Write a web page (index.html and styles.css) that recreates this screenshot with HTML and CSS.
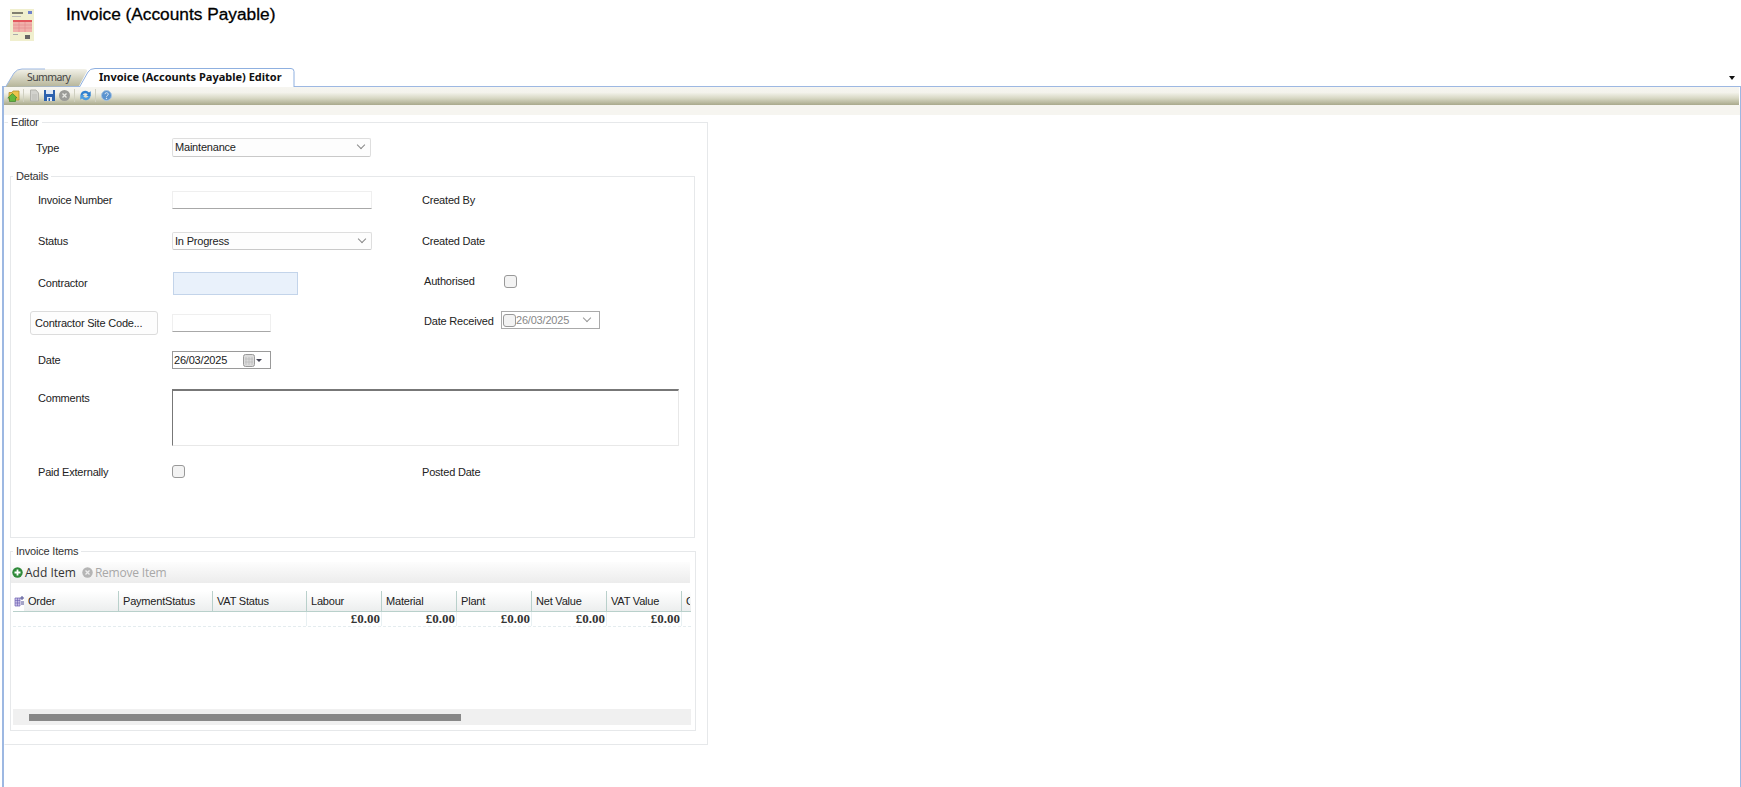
FILE: index.html
```html
<!doctype html>
<html>
<head>
  <meta charset="utf-8">
  <title>Invoice (Accounts Payable)</title>
  <link rel="stylesheet" href="styles.css">
</head>
<body>

  <header class="page-head">
    <svg class="logo" width="24" height="32" viewBox="0 0 24 32">
      <rect width="24" height="32" fill="#f0efce"/>
      <rect x="2" y="3" width="11" height="2" fill="#807f70"/>
      <rect x="18" y="2" width="4" height="3" fill="#6f82cc"/>
      <rect x="2" y="7" width="9" height="1" fill="#bbb"/>
      <rect x="3" y="11" width="19" height="2" fill="#e2565c"/>
      <rect x="3" y="13" width="19" height="10" fill="#f0b0aa"/>
      <path d="M9 13v10M15 13v10M3 16h19M3 19h19" stroke="#e4888a" stroke-width=".6"/>
      <rect x="3" y="25" width="5" height="1" fill="#aaa"/>
      <rect x="15" y="26" width="5" height="4" fill="#666"/>
    </svg>
    <h1 class="title">Invoice (Accounts Payable)</h1>
  </header>

  <nav class="tabs">
    <div class="tab tab-summary">
      <svg class="tab-shape" width="82" height="19" viewBox="0 0 82 19">
        <defs>
          <linearGradient id="tabfill" x1="0" y1="0" x2="0" y2="1">
            <stop offset="0" stop-color="#f2f1e8"/>
            <stop offset="1" stop-color="#b5b498"/>
          </linearGradient>
        </defs>
        <path d="M.5 19 9 5Q12 1 17 1H79Q84 1 81 5L74 18" fill="url(#tabfill)"/>
        <path d="M.5 19 9 5Q12 1 17 1H40" fill="none" stroke="#9db8e2"/>
      </svg>
      <span>Summary</span>
    </div>
    <div class="tab tab-active">
      <svg class="tab-shape" width="216" height="19" viewBox="0 0 216 19">
        <path d="M.5 19 9 4Q11 .5 16 .5H212Q215 .5 215 3.500V19" fill="#fff" stroke="#8fb0e0"/>
      </svg>
      <span>Invoice (Accounts Payable) Editor</span>
    </div>
    <span class="tab-menu"></span>
  </nav>

  <main class="panel">
    <div class="toolbar">
      <svg class="tool" width="13" height="13" viewBox="0 0 13 13">
        <path d="M2 11V3.500h3l1-1.500h6v9z" fill="#edc44e" stroke="#b58f28" stroke-width=".8"/>
        <path d="M5.500 4.500 .8 9h1.700v3.500h6V9h1.700z" fill="#63b83e" stroke="#2f7d1e" stroke-width=".6"/>
      </svg>
      <i class="tool-sep"></i>
      <svg class="tool" width="13" height="13" viewBox="0 0 13 13">
        <path d="M2.500 1H8l2.500 3v8h-8z" fill="#d2d2cd" stroke="#b2b2ac"/>
        <path d="M4 6h5M4 8h5M4 10h5" stroke="#bcbcb6"/>
      </svg>
      <svg class="tool" width="13" height="13" viewBox="0 0 13 13">
        <path d="M1 1h11v11H1z" fill="#2d62ae"/>
        <path d="M3 1h7v4H3z" fill="#dfe8f5"/>
        <path d="M4 8h5v4H4z" fill="#dfe8f5"/>
        <path d="M5.500 9h1.500v3h-1.500z" fill="#2d62ae"/>
      </svg>
      <svg class="tool" width="13" height="13" viewBox="0 0 13 13">
        <circle cx="6.500" cy="6.500" r="5.500" fill="#9b9b98"/>
        <path d="M4.500 4.500l4 4M8.500 4.500l-4 4" stroke="#e8e8e4" stroke-width="1.300"/>
      </svg>
      <i class="tool-sep"></i>
      <svg class="tool" width="13" height="13" viewBox="0 0 13 13">
        <path d="M1.500 6a4.800 4.800 0 0 1 8.500-2.500l1.700-1.200V7H7.200l1.500-1.300A3 3 0 0 0 3.500 6z" fill="#2f80d0"/>
        <path d="M11.500 7A4.800 4.800 0 0 1 3 9.500l-1.700 1.200V6h4.500L4.300 7.300A3 3 0 0 0 9.500 7z" fill="#4a9be0"/>
      </svg>
      <i class="tool-sep"></i>
      <svg class="tool" width="13" height="13" viewBox="0 0 13 13">
        <circle cx="6.500" cy="6.500" r="5" fill="#5b93cf" stroke="#a9c5e2"/>
        <path d="M5 5.200a1.600 1.600 0 1 1 2.300 1.500c-.6.300-.8.600-.8 1.100" fill="none" stroke="#dfeaf6"/>
        <circle cx="6.500" cy="9.500" r=".7" fill="#dfeaf6"/>
      </svg>
    </div>
    <div class="band"></div>

    <fieldset class="group group-editor">
      <legend>Editor</legend>

      <div class="row row-type">
        <label class="label label-type">Type</label>
        <div class="select select-type">Maintenance</div>
      </div>

      <fieldset class="group group-details">
        <legend>Details</legend>

        <div class="row row-number">
          <label class="label">Invoice Number</label>
          <div class="col-field"><input class="input input-wide" type="text"></div>
          <label class="label">Created By</label>
        </div>

        <div class="row row-status">
          <label class="label">Status</label>
          <div class="col-field"><div class="select">In Progress</div></div>
          <label class="label">Created Date</label>
        </div>

        <div class="row row-contractor">
          <label class="label">Contractor</label>
          <div class="col-field"><div class="lookup"></div></div>
          <label class="label label-right label-auth">Authorised</label>
          <span class="check"></span>
        </div>

        <div class="row row-site">
          <button class="site-btn" type="button">Contractor Site Code...</button>
          <div class="col-field"><input class="input input-short" type="text"></div>
          <label class="label label-right label-received">Date Received</label>
          <div class="date-off">
            <span class="check"></span>
            <span class="date-off-text">26/03/2025</span>
          </div>
        </div>

        <div class="row row-date">
          <label class="label">Date</label>
          <div class="col-field">
            <div class="date-box">
              <span>26/03/2025</span>
              <svg class="cal" width="12" height="13" viewBox="0 0 12 13">
                <rect x=".5" y=".5" width="11" height="12" rx="2" fill="#dcdcdc" stroke="#9a9a9a"/>
                <path d="M3 3v8M6 3v8M9 3v8M2 5h8M2 8h8" stroke="#b8b8b8" stroke-width=".7"/>
              </svg>
              <i class="date-arrow"></i>
            </div>
          </div>
        </div>

        <div class="row row-comments">
          <label class="label label-comments">Comments</label>
          <textarea class="comments"></textarea>
        </div>

        <div class="row row-paid">
          <label class="label">Paid Externally</label>
          <div class="col-field"><span class="check"></span></div>
          <label class="label">Posted Date</label>
        </div>
      </fieldset>

      <fieldset class="group group-items">
        <legend>Invoice Items</legend>

        <div class="items-bar">
          <svg width="11" height="11" viewBox="0 0 11 11">
            <circle cx="5.500" cy="5.500" r="5.200" fill="#2f8a3a"/>
            <path d="M5.500 2.500v6M2.500 5.500h6" stroke="#fff" stroke-width="1.800"/>
          </svg>
          <span class="bar-btn">Add Item</span>
          <svg class="bar-icon-off" width="11" height="11" viewBox="0 0 11 11">
            <circle cx="5.500" cy="5.500" r="5.200" fill="#b5b5b5"/>
            <path d="M3.500 3.500l4 4M7.500 3.500l-4 4" stroke="#eee" stroke-width="1.300"/>
          </svg>
          <span class="bar-btn bar-btn-off">Remove Item</span>
        </div>

        <div class="grid">
          <div class="grid-row grid-head">
            <div class="cell cell-chooser">
              <svg width="11" height="12" viewBox="0 0 11 12">
                <path d="M1 3h5v8H1z" fill="#c9bfe8" stroke="#6a5fb0" stroke-width=".7"/>
                <path d="M1 5.500h5M1 8h5M3.500 3v8" stroke="#6a5fb0" stroke-width=".6"/>
                <path d="M8 1v4M6 3h4M7 7h3M7 9h3" stroke="#4a4a90"/>
              </svg>
            </div>
            <div class="cell cell-order">Order</div>
            <div class="cell cell-wide">PaymentStatus</div>
            <div class="cell cell-wide">VAT Status</div>
            <div class="cell">Labour</div>
            <div class="cell">Material</div>
            <div class="cell">Plant</div>
            <div class="cell">Net Value</div>
            <div class="cell">VAT Value</div>
            <div class="cell cell-rest">Cost</div>
          </div>
          <div class="grid-row grid-sum">
            <div class="sum sum-blank"></div>
            <div class="sum">£0.00</div>
            <div class="sum">£0.00</div>
            <div class="sum">£0.00</div>
            <div class="sum">£0.00</div>
            <div class="sum">£0.00</div>
            <div class="sum sum-rest"></div>
          </div>
          <div class="grid-body"></div>
          <div class="hscroll"><div class="hscroll-thumb"></div></div>
        </div>
      </fieldset>
    </fieldset>
  </main>

</body>
</html>
```

FILE: styles.css
```css
html, body {
  height: 100%;
}

body {
  margin: 0;
  overflow: hidden;
  background: #fff;
  color: #222;
  font-family: "Liberation Sans", Arial, sans-serif;
  font-size: 11px;
  letter-spacing: -.2px;
}

.page-head {
  display: flex;
  height: 68px;
  padding: 9px 0 0 10px;
  box-sizing: border-box;
  letter-spacing: 0;
}

.title {
  margin: -5px 0 0 32px;
  font-size: 17.3px;
  line-height: 20px;
  font-weight: normal;
  color: #000;
  -webkit-text-stroke: .3px #000;
}

.tabs {
  display: flex;
  height: 18px;
  padding-left: 5px;
  position: relative;
  font-family: "Noto Sans", sans-serif;
  font-size: 11px;
  letter-spacing: 0;
}

.tab {
  position: relative;
  height: 19px;
  z-index: 1;
  line-height: 18px;
}

.tab span {
  position: relative;
}

.tab-shape {
  position: absolute;
  left: 0;
  top: 0;
}

.tab-summary {
  width: 74px;
  padding-left: 22px;
  box-sizing: border-box;
  font-size: 10.5px;
  letter-spacing: -.6px;
  color: #444;
}

.tab-active {
  width: 216px;
  padding-left: 20px;
  box-sizing: border-box;
  font-weight: bold;
  color: #111;
}

.tab-menu {
  position: absolute;
  right: 6px;
  top: 8px;
  border-top: 4px solid #111;
  border-left: 3px solid transparent;
  border-right: 3px solid transparent;
}

.panel {
  height: 701px;
  box-sizing: border-box;
  margin-left: 2px;
  border: 1px solid #9db8e2;
  border-left-width: 2px;
  border-bottom: none;
}

.toolbar {
  display: flex;
  align-items: center;
  gap: 2px;
  height: 18px;
  margin-right: 1px;
  padding: 0 0 2px 3px;
  box-sizing: border-box;
  background: linear-gradient(#f6f5f0 0, #f4f3ec 30%, #d8d8c4 62%, #a9a98c 100%);
}

.tool-sep {
  width: 1px;
  height: 13px;
  margin: 0 2px 0 1px;
  background: #cfcfc0;
}

.band {
  height: 10px;
  background: #f6f5f0;
}

.group {
  margin: 0;
  padding: 0;
  border: 1px solid #e6e8ea;
  box-sizing: border-box;
  min-width: 0;
}

.group legend {
  margin-left: 2px;
  padding: 0 3px;
  font-size: 11px;
  line-height: 14px;
  color: #333;
}

.group-editor {
  width: 704px;
  height: 630px;
  border-left-color: #fff;
}

.group-editor > legend {
  margin-left: 3px;
}

.row {
  display: flex;
  align-items: center;
}

.label {
  color: #222;
}

.row-type {
  height: 25px;
  margin-top: 5px;
  padding: 1px 0 0 31px;
  box-sizing: border-box;
}

.label-type {
  width: 136px;
  padding-top: 1px;
}

.select {
  position: relative;
  width: 200px;
  height: 18px;
  box-sizing: border-box;
  border: 1px solid #dedede;
  border-bottom-color: #c9c9c9;
  border-radius: 2px;
  background: #fdfdfd;
  padding-left: 2px;
  line-height: 16px;
}

.select::after {
  content: "";
  position: absolute;
  right: 6px;
  top: 3px;
  width: 5px;
  height: 5px;
  border-right: 1px solid #888;
  border-bottom: 1px solid #888;
  transform: rotate(45deg);
}

.select-type {
  width: 199px;
  height: 19px;
}

.group-details {
  width: 685px;
  height: 369px;
  margin: 10px 0 6px 5px;
}

.group-details .row {
  padding-left: 27px;
  box-sizing: border-box;
}

.group-details .row > .label:first-child {
  width: 134px;
}

.col-field {
  width: 250px;
}

.row-number {
  height: 33px;
  margin-bottom: 2px;
}

.row-status {
  height: 46px;
}

.row-contractor {
  height: 38px;
}

.row-site {
  height: 41px;
}

.row-date {
  height: 34px;
}

.row-comments {
  height: 60px;
  margin-top: 12px;
  align-items: flex-start;
}

.row-paid {
  height: 44px;
  margin-top: 1px;
}

.input {
  display: block;
  height: 18px;
  padding: 0;
  box-sizing: border-box;
  background: #fff;
  border: 1px solid #efefef;
  border-bottom: 1px solid #a8a8a8;
}

.input-wide {
  width: 200px;
}

.input-short {
  width: 99px;
}

.lookup {
  width: 125px;
  height: 23px;
  margin: 0 0 0 1px;
  box-sizing: border-box;
  background: #e9f1fb;
  border: 1px solid #c3d4ea;
}

.label-right {
  margin-left: 2px;
}

.label-auth {
  width: 80px;
  margin-top: -4px;
}

.row-contractor .check {
  margin-top: -4px;
}

.label-received {
  width: 77px;
  margin-top: -4px;
}

.check {
  display: inline-block;
  width: 13px;
  height: 13px;
  box-sizing: border-box;
  border: 1px solid #999;
  border-radius: 3px;
  background: #f3f3f3;
}

.site-btn {
  width: 128px;
  height: 24px;
  margin: 0 14px 0 -8px;
  padding: 0 0 0 4px;
  font: inherit;
  letter-spacing: inherit;
  text-align: left;
  color: #222;
  background: #fdfdfd;
  border: 1px solid #dcdcdc;
  border-radius: 3px;
}

.date-off {
  display: flex;
  align-items: center;
  width: 99px;
  height: 18px;
  margin-top: -5px;
  box-sizing: border-box;
  border: 1px solid #aaa;
  position: relative;
}

.date-off .check {
  margin-left: 1px;
  flex: none;
}

.date-off-text {
  color: #888;
}

.date-off::after {
  content: "";
  position: absolute;
  right: 9px;
  top: 3px;
  width: 5px;
  height: 5px;
  border-right: 1px solid #999;
  border-bottom: 1px solid #999;
  transform: rotate(45deg);
}

.date-box {
  display: flex;
  align-items: center;
  width: 99px;
  height: 18px;
  box-sizing: border-box;
  border: 1px solid #9a9a9a;
  color: #222;
  padding-left: 1px;
}

.cal {
  margin-left: 16px;
}

.date-arrow {
  margin-left: 1px;
  border-top: 3px solid #445;
  border-left: 3px solid transparent;
  border-right: 3px solid transparent;
}

.comments {
  display: block;
  width: 507px;
  height: 57px;
  margin: 0;
  padding: 0;
  box-sizing: border-box;
  resize: none;
  border: 1px solid #e8e8e8;
  border-top: 2px solid #777;
  border-left: 1px solid #777;
  background: #fff;
}

.label-comments {
  margin-top: 3px;
}

.group-items {
  width: 686px;
  height: 187px;
  margin-left: 5px;
}

.items-bar {
  display: flex;
  align-items: center;
  width: 679px;
  height: 21px;
  margin-top: 4px;
  padding-left: 1px;
  box-sizing: border-box;
  background: linear-gradient(#fdfdfd, #ececec);
}

.bar-btn {
  margin-left: 2px;
  font-family: "Open Sans", sans-serif;
  font-size: 12px;
  letter-spacing: 0;
  color: #333;
}

.bar-icon-off {
  margin-left: 6px;
}

.bar-btn-off {
  color: #a8a8a8;
  letter-spacing: -.2px;
}

.grid {
  width: 678px;
  margin: 8px 0 0 2px;
  overflow: hidden;
}

.grid-row {
  display: flex;
}

.grid-head {
  height: 20px;
  background: linear-gradient(#fff, #eceeee);
  border-bottom: 1px solid #b9d0cb;
}

.cell {
  width: 75px;
  flex: none;
  height: 20px;
  box-sizing: border-box;
  border-right: 1px solid #b9d0cb;
  padding-left: 4px;
  line-height: 21px;
  white-space: nowrap;
}

.cell-chooser {
  width: 11px;
  padding: 4px 0 0 1px;
  line-height: 0;
  background: #fff;
  border-right: none;
}

.cell-order {
  width: 95px;
}

.cell-wide {
  width: 94px;
}

.cell-rest {
  width: 8px;
  overflow: hidden;
  border-right: none;
}

.grid-sum {
  height: 14px;
  border-bottom: 1px dashed #e4ecef;
  font-family: "Liberation Serif", serif;
  font-size: 13px;
  font-weight: bold;
  letter-spacing: 0;
  color: #333;
}

.sum {
  width: 75px;
  flex: none;
  box-sizing: border-box;
  padding-right: 1px;
  text-align: right;
  line-height: 14px;
  border-right: 1px solid #e8f0f2;
}

.sum-blank {
  width: 294px;
}

.sum-rest {
  width: 8px;
  border-right: none;
}

.grid-body {
  height: 82px;
}

.hscroll {
  height: 16px;
  padding: 5px 0 0 16px;
  box-sizing: border-box;
  background: #f0f0f0;
}

.hscroll-thumb {
  width: 432px;
  height: 7px;
  background: #888;
}
```
